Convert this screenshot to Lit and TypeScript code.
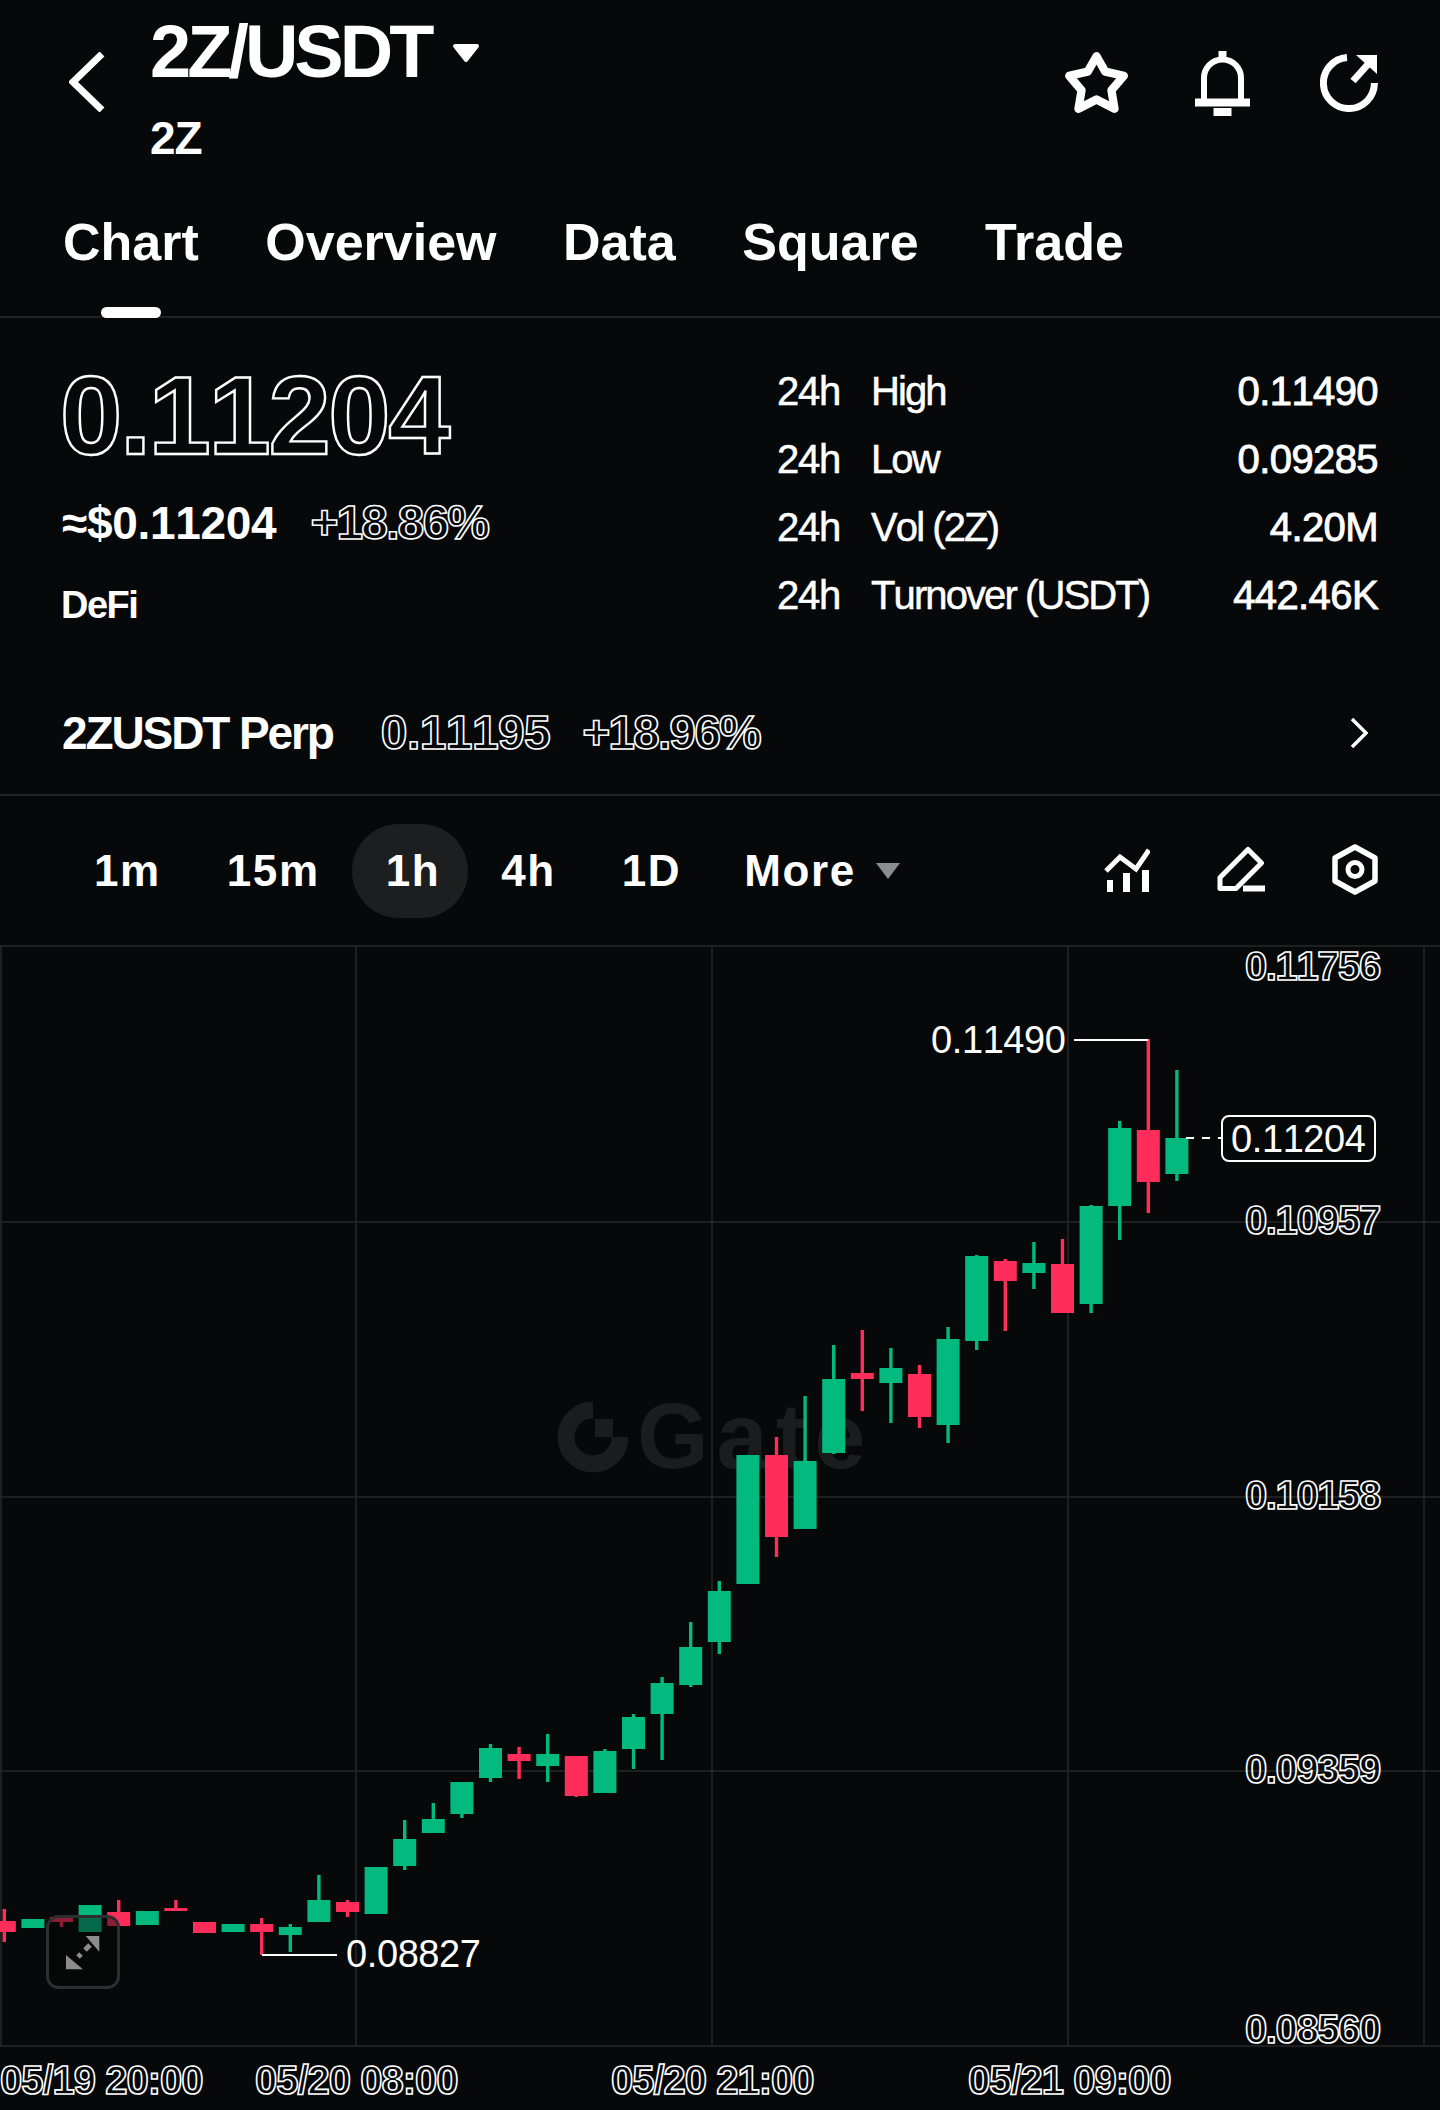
import { html, svg, LitElement, css } from 'lit';
import { customElement } from 'lit/decorators.js';

const UP = '#02ba7e';
const DOWN = '#ff2d5a';

// [wickTop, wickBottom, bodyTop, bodyBottom, isUp], page coordinates
const CANDLES: [number, number, number, number, boolean][] = [
    [1909, 1942, 1921, 1932, false],
    [1919, 1928, 1919, 1928, true],
    [1916, 1927, 1917, 1922, false],
    [1905, 1932, 1905, 1932, true],
    [1900, 1926, 1912, 1926, false],
    [1911, 1925, 1911, 1925, true],
    [1900, 1911, 1908, 1911, false],
    [1922, 1933, 1922, 1933, false],
    [1924, 1932, 1924, 1932, true],
    [1918, 1955, 1924, 1932, false],
    [1924, 1952, 1927, 1935, true],
    [1875, 1922, 1900, 1922, true],
    [1900, 1917, 1902, 1912, false],
    [1867, 1914, 1867, 1914, true],
    [1820, 1870, 1839, 1866, true],
    [1803, 1833, 1819, 1833, true],
    [1782, 1818, 1782, 1814, true],
    [1744, 1782, 1748, 1778, true],
    [1747, 1779, 1754, 1761, false],
    [1734, 1782, 1754, 1766, true],
    [1756, 1797, 1756, 1796, false],
    [1749, 1793, 1751, 1793, true],
    [1714, 1769, 1717, 1749, true],
    [1677, 1760, 1683, 1714, true],
    [1622, 1687, 1647, 1685, true],
    [1581, 1654, 1591, 1642, true],
    [1455, 1584, 1455, 1584, true],
    [1437, 1557, 1455, 1537, false],
    [1396, 1529, 1461, 1529, true],
    [1345, 1454, 1379, 1453, true],
    [1330, 1411, 1373, 1379, false],
    [1348, 1423, 1368, 1383, true],
    [1365, 1428, 1374, 1417, false],
    [1327, 1443, 1339, 1425, true],
    [1255, 1350, 1256, 1341, true],
    [1259, 1331, 1261, 1281, false],
    [1242, 1289, 1263, 1273, true],
    [1239, 1313, 1264, 1313, false],
    [1205, 1313, 1206, 1304, true],
    [1121, 1240, 1128, 1206, true],
    [1039, 1213, 1130, 1182, false],
    [1070, 1181, 1138, 1174, true],
];

const AXIS: [string, number][] = [
    ['0.11756', 980],
    ['0.10957', 1234],
    ['0.10158', 1509],
    ['0.09359', 1783],
    ['0.08560', 2043],
];

const DATES: [string, number][] = [
    ['05/19 20:00', 0],
    ['05/20 08:00', 255],
    ['05/20 21:00', 611],
    ['05/21 09:00', 968],
];

const H_LINES = [946, 1222, 1497, 1771, 2046];
const V_LINES = [1, 356, 712, 1068, 1424];

@customElement('kline-chart')
export class KlineChart extends LitElement {
    static styles = css`
    :host {
        display: block;
        height: 1164px;
    }
    svg {
        display: block;
        overflow: visible;
    }
    text {
        font-family: 'Liberation Sans', Arial, sans-serif;
        font-kerning: none;
    }
    .grid {
        stroke: #26282a;
        stroke-width: 1.5;
    }
    .axis {
        font-size: 40px;
        font-weight: 700;
        letter-spacing: -1.4px;
        fill: none;
        stroke: #fff;
        stroke-width: 1.6;
    }
    .date {
        font-size: 40px;
        font-weight: 700;
        letter-spacing: -1px;
        fill: none;
        stroke: #fff;
        stroke-width: 1.6;
    }
    .mark {
        font-size: 38px;
        letter-spacing: -0.4px;
        fill: #fff;
    }
    .leader {
        stroke: #fff;
        stroke-width: 2;
        fill: none;
    }
    .watermark {
        font-size: 92px;
        font-weight: 700;
        letter-spacing: 8px;
        fill: #1a1c1d;
    }
    `;

    private candle(c: [number, number, number, number, boolean], i: number) {
        const x = 4.3 + 28.6 * i;
        const color = c[4] ? UP : DOWN;
        return svg`
        <rect x=${x - 1.7} y=${c[0]} width="3.4" height=${c[1] - c[0]} fill=${color}></rect>
        <rect x=${x - 11.5} y=${c[2]} width="23" height=${c[3] - c[2]} fill=${color}></rect>`;
    }

    render() {
        return html`
        <svg width="1440" height="1164" viewBox="0 946 1440 1164">
            ${H_LINES.map((y) => svg`<line class="grid" x1="0" x2="1440" y1=${y} y2=${y}></line>`)}
            ${V_LINES.map((x) => svg`<line class="grid" x1=${x} x2=${x} y1="946" y2="2046"></line>`)}

            <path d="M593 1410A27 27 0 1 0 620 1437" fill="none" stroke="#1a1c1d" stroke-width="17"></path>
            <rect x="595" y="1419" width="18" height="18" fill="#1a1c1d"></rect>
            <text class="watermark" x="637" y="1468">Gate</text>

            ${CANDLES.map((c, i) => this.candle(c, i))}

            ${AXIS.map(([t, y]) => svg`<text class="axis" x="1245" y=${y}>${t}</text>`)}
            ${DATES.map(([t, x]) => svg`<text class="date" x=${x} y="2094">${t}</text>`)}

            <text class="mark" x="931" y="1053">0.11490</text>
            <path class="leader" d="M1074 1040H1148"></path>
            <text class="mark" x="346" y="1967">0.08827</text>
            <path class="leader" d="M262 1955H337"></path>

            <path class="leader" d="M1186 1138H1221" stroke-dasharray="8 8"></path>
            <rect x="1222" y="1116" width="153" height="45" rx="7" fill="#060809" stroke="#fff" stroke-width="2"></rect>
            <text class="mark" x="1231" y="1152">0.11204</text>

            <rect x="47.5" y="1916.5" width="71" height="71" rx="11" fill="#060809" fill-opacity="0.45" stroke="#2c2e30" stroke-width="3"></rect>
            <path d="M85.7 1936H99.3V1951.7ZM66 1955V1969.3H82.9Z" fill="#8c8c8c"></path>
            <path d="M78 1957L81 1954M85 1950L90 1945" stroke="#8c8c8c" stroke-width="5" fill="none"></path>
        </svg>
        `;
    }
}

@customElement('app-root')
export class AppRoot extends LitElement {
    static styles = css`
    :host {
        display: block;
        width: 1440px;
        height: 2110px;
        overflow: hidden;
        background: #060809;
        color: #fff;
        font-family: 'Liberation Sans', Arial, sans-serif;
        font-kerning: none;
        --line: #1f2123;
    }
    svg {
        display: block;
        flex: none;
    }
    .top-bar {
        display: flex;
        height: 190px;
        box-sizing: border-box;
        padding: 12px 62px 0 69px;
    }
    .back {
        margin: 40px 0 0 0;
    }
    .title-col {
        margin-left: 45px;
    }
    .title-line {
        display: flex;
    }
    .title {
        font-size: 74px;
        line-height: 80px;
        font-weight: 700;
        letter-spacing: -4px;
    }
    .title-caret {
        margin: 31px 0 0 22px;
    }
    .subtitle {
        margin-top: 21px;
        font-size: 46px;
        line-height: 50px;
        font-weight: 700;
        letter-spacing: -1px;
    }
    .top-actions {
        display: flex;
        align-items: center;
        margin-left: auto;
        height: 142px;
        gap: 65px;
    }
    .tabs {
        display: flex;
        gap: 66.5px;
        height: 128px;
        box-sizing: border-box;
        padding: 22px 63px 0;
        border-bottom: 2px solid var(--line);
        font-kerning: normal;
    }
    .tab {
        position: relative;
        height: 106px;
        font-size: 52px;
        line-height: 60px;
        font-weight: 700;
    }
    .tab.active::after {
        content: '';
        position: absolute;
        left: 38px;
        bottom: 0;
        width: 60px;
        height: 11px;
        border-radius: 6px;
        background: #fff;
    }
    .stats {
        display: flex;
        justify-content: space-between;
        height: 358px;
        box-sizing: border-box;
        padding: 38px 62px 0;
    }
    .price {
        margin-left: -2px;
        font-size: 112px;
        line-height: 120px;
        font-weight: 700;
        letter-spacing: -2.4px;
    }
    .outline {
        color: transparent;
        -webkit-text-stroke: 1.6px #fff;
    }
    .price.outline {
        -webkit-text-stroke-width: 2.4px;
    }
    .approx-row {
        display: flex;
        align-items: center;
        gap: 34px;
        margin-top: 21px;
    }
    .approx {
        font-size: 46px;
        line-height: 52px;
        font-weight: 700;
        letter-spacing: -0.3px;
    }
    .change {
        font-size: 48px;
        line-height: 52px;
        font-weight: 700;
        letter-spacing: -1.9px;
    }
    .sector {
        margin: 34px 0 0 -1px;
        font-size: 38px;
        line-height: 44px;
        font-weight: 700;
        letter-spacing: -1.5px;
    }
    .stat-table {
        width: 601px;
        margin-top: 1px;
    }
    .stat-row {
        display: flex;
        font-size: 40px;
        line-height: 68px;
        -webkit-text-stroke: 0.5px #fff;
    }
    .stat-period {
        width: 94px;
        letter-spacing: -1.2px;
    }
    .stat-label {
        letter-spacing: -1.9px;
    }
    .stat-value {
        margin-left: auto;
        letter-spacing: -0.6px;
        -webkit-text-stroke-width: 0.9px;
    }
    .perp {
        display: flex;
        align-items: center;
        height: 120px;
        box-sizing: border-box;
        padding: 32px 72px 36px 62px;
        border-bottom: 2px solid var(--line);
    }
    .perp-name {
        font-size: 46px;
        line-height: 52px;
        font-weight: 700;
        letter-spacing: -2.1px;
    }
    .perp-price {
        margin-left: 48px;
        font-size: 48px;
        line-height: 52px;
        font-weight: 700;
        letter-spacing: -0.6px;
    }
    .perp-change {
        margin-left: 32px;
    }
    .perp-more {
        margin-left: auto;
    }
    .intervals {
        display: flex;
        align-items: center;
        height: 150px;
        box-sizing: border-box;
        padding: 0 62px 0 61px;
    }
    .interval {
        padding: 0 33px;
        font-size: 44px;
        line-height: 94px;
        font-weight: 700;
        letter-spacing: 1.6px;
        border-radius: 47px;
    }
    .interval.active {
        margin-left: -1px;
        padding: 0 28px 0 34px;
        background: #1c1e20;
    }
    .interval.last {
        margin-left: -3px;
    }
    .more-caret {
        margin-left: -13px;
    }
    .tools {
        display: flex;
        align-items: center;
        gap: 67px;
        margin: 0 0 4px auto;
    }
    `;

    render() {
        return html`
        <div class="top-bar">
            <svg class="back" width="36" height="60" viewBox="0 0 36 60">
                <path d="M33 2L4 30L33 58" fill="none" stroke="#fff" stroke-width="7"></path>
            </svg>
            <div class="title-col">
                <div class="title-line">
                    <div class="title">2Z/USDT</div>
                    <svg class="title-caret" width="28" height="20" viewBox="0 0 28 20">
                        <path d="M3 3H25L14 17Z" fill="#fff" stroke="#fff" stroke-width="4" stroke-linejoin="round"></path>
                    </svg>
                </div>
                <div class="subtitle">2Z</div>
            </div>
            <div class="top-actions">
                <svg width="67" height="65" viewBox="0 0 65 63">
                    <path d="M32.5 5L41 20L59 24L47 38L50 56L32.5 47L15 56L18 38L6 24L24 20Z" fill="none" stroke="#fff" stroke-width="8" stroke-linejoin="round"></path>
                </svg>
                <svg width="55" height="65" viewBox="0 0 55 65">
                    <rect x="23.5" width="8" height="8" fill="#fff"></rect>
                    <path d="M9 48V27a18.5 18.5 0 0 1 37 0V48" fill="none" stroke="#fff" stroke-width="6"></path>
                    <rect y="47.5" width="55" height="8" fill="#fff"></rect>
                    <rect x="18.5" y="57" width="18" height="8" fill="#fff"></rect>
                </svg>
                <svg style="margin-left:5px" width="58" height="58" viewBox="0 0 58 58">
                    <path d="M27 3.6A25.5 25.5 0 1 0 54.4 29" fill="none" stroke="#fff" stroke-width="7"></path>
                    <path d="M36 1H57V20Z" fill="#fff"></path>
                    <path d="M50 8L33 27" stroke="#fff" stroke-width="7"></path>
                </svg>
            </div>
        </div>

        <div class="tabs">
            <div class="tab active">Chart</div>
            <div class="tab">Overview</div>
            <div class="tab">Data</div>
            <div class="tab">Square</div>
            <div class="tab">Trade</div>
        </div>

        <div class="stats">
            <div>
                <div class="price outline">0.11204</div>
                <div class="approx-row">
                    <div class="approx">≈$0.11204</div>
                    <div class="change outline">+18.86%</div>
                </div>
                <div class="sector">DeFi</div>
            </div>
            <div class="stat-table">
                <div class="stat-row"><span class="stat-period">24h</span><span class="stat-label">High</span><span class="stat-value">0.11490</span></div>
                <div class="stat-row"><span class="stat-period">24h</span><span class="stat-label">Low</span><span class="stat-value">0.09285</span></div>
                <div class="stat-row"><span class="stat-period">24h</span><span class="stat-label">Vol (2Z)</span><span class="stat-value">4.20M</span></div>
                <div class="stat-row"><span class="stat-period">24h</span><span class="stat-label">Turnover (USDT)</span><span class="stat-value">442.46K</span></div>
            </div>
        </div>

        <div class="perp">
            <div class="perp-name">2ZUSDT Perp</div>
            <div class="perp-price outline">0.11195</div>
            <div class="change perp-change outline">+18.96%</div>
            <svg class="perp-more" width="18" height="30" viewBox="0 0 18 30">
                <path d="M2 1L16 15L2 29" fill="none" stroke="#fff" stroke-width="3.5"></path>
            </svg>
        </div>

        <div class="intervals">
            <div class="interval">1m</div>
            <div class="interval">15m</div>
            <div class="interval active">1h</div>
            <div class="interval">4h</div>
            <div class="interval">1D</div>
            <div class="interval last">More</div>
            <svg class="more-caret" width="24" height="16" viewBox="0 0 24 16">
                <path d="M0 0H24L12 16Z" fill="#8a8c8e"></path>
            </svg>
            <div class="tools">
                <svg width="46" height="45" viewBox="0 0 46 45">
                    <path d="M2 24L16 10L32 22L45 3" fill="none" stroke="#fff" stroke-width="5"></path>
                    <rect x="3" y="33" width="6" height="12" fill="#fff"></rect>
                    <rect x="19" y="26" width="7" height="19" fill="#fff"></rect>
                    <rect x="38" y="23" width="7" height="22" fill="#fff"></rect>
                </svg>
                <svg width="48" height="46" viewBox="0 0 48 46">
                    <path d="M3 42.5V31.5L31 3.5L44.5 17L19 42.5Z" fill="none" stroke="#fff" stroke-width="5" stroke-linejoin="round"></path>
                    <rect x="26" y="39.5" width="22" height="6" fill="#fff"></rect>
                </svg>
                <svg width="46" height="51" viewBox="0 0 46 51">
                    <path d="M23 3L43 14V37L23 48L3 37V14Z" fill="none" stroke="#fff" stroke-width="5.5" stroke-linejoin="round"></path>
                    <circle cx="23" cy="25.5" r="7" fill="none" stroke="#fff" stroke-width="5"></circle>
                </svg>
            </div>
        </div>

        <kline-chart></kline-chart>
        `;
    }
}
